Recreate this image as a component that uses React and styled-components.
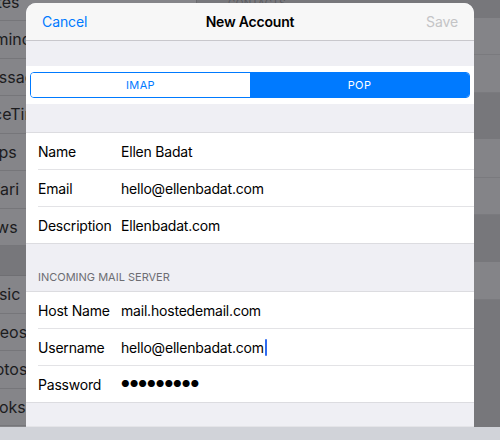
import React from 'react';
import styled, { createGlobalStyle } from 'styled-components';

const GlobalStyle = createGlobalStyle`
  html, body {
    margin: 0;
    padding: 0;
    background: #d1d3d9;
  }
  body {
    font-family: Inter, "Noto Sans", "Liberation Sans", sans-serif;
    -webkit-font-smoothing: antialiased;
  }
`;

const Page = styled.div`
  width: 500px;
  height: 440px;
  display: flex;
  flex-direction: column;
  overflow: hidden;
`;

const Screen = styled.div`
  position: relative;
  height: 427px;
  flex: none;
  overflow: hidden;
`;

const Backdrop = styled.div`
  height: 100%;
  display: grid;
  grid-template-columns: 197px 1fr;
`;

const Sidebar = styled.div`
  background: #858589;
  border-right: 1px solid #6a6a6e;
  display: flex;
  flex-direction: column;
  margin-top: -16.5px;
`;

const SidebarRow = styled.div`
  height: 36.5px;
  flex: none;
  border-bottom: 1px solid #76767a;
  display: flex;
  align-items: center;
  margin-left: -25px;
  font-size: 16px;
  color: #1c1c1e;
  white-space: nowrap;
`;

const SidebarGap = styled.div`
  height: 29px;
  flex: none;
  background: #77777b;
  border-bottom: 1px solid #6f6f73;
`;

const Pane = styled.div`
  display: flex;
  flex-direction: column;
  background: #77777b;
`;

const PaneHeader = styled.div`
  height: 18px;
  flex: none;
  padding-left: 31px;
  font-size: 10px;
  color: #5a5a5e;
  letter-spacing: 0.4px;
  line-height: 6px;
`;

const PaneBand = styled.div`
  height: ${p => p.h}px;
  flex: none;
  background: ${p => (p.light ? '#848488' : '#77777b')};
  border-bottom: 1px solid ${p => (p.light ? '#7a7a7e' : '#77777b')};
`;

const Modal = styled.div`
  position: absolute;
  left: 26px;
  top: 3px;
  width: 448px;
  height: 423px;
  background: #efeff4;
  border-radius: 10px 10px 0 0;
  overflow: hidden;
  display: flex;
  flex-direction: column;
  border-bottom: 1px solid #e4e4e8;
`;

const NavBar = styled.div`
  height: 37px;
  flex: none;
  background: #f7f7f7;
  border-bottom: 1px solid #c8c7cc;
  display: grid;
  grid-template-columns: 1fr auto 1fr;
  align-items: center;
  padding: 0 16px;
  font-size: 14px;
`;

const NavButton = styled.span`
  color: ${p => (p.disabled ? '#c4c4c6' : '#007aff')};
  justify-self: ${p => (p.right ? 'end' : 'start')};
  letter-spacing: -0.1px;
`;

const NavTitle = styled.span`
  font-weight: 600;
  color: #000;
  letter-spacing: -0.2px;
`;

const Spacer = styled.div`
  height: ${p => p.h}px;
  flex: none;
`;

const SegmentBand = styled.div`
  background: #fff;
  padding: 6px 4px;
  flex: none;
`;

const Segmented = styled.div`
  height: 24px;
  display: grid;
  grid-template-columns: 1fr 1fr;
  border: 1px solid #007aff;
  border-radius: 4px;
  overflow: hidden;
`;

const Segment = styled.div`
  display: flex;
  align-items: center;
  justify-content: center;
  font-size: 11px;
  font-weight: 400;
  letter-spacing: 0.4px;
  background: ${p => (p.active ? '#007aff' : '#fff')};
  color: ${p => (p.active ? '#fff' : '#007aff')};
`;

const Group = styled.div`
  background: #fff;
  border-top: 1px solid #dcdce0;
  border-bottom: 1px solid #dcdce0;
  padding-left: 12px;
  flex: none;
`;

const Row = styled.div`
  height: 36px;
  display: flex;
  align-items: center;
  font-size: 14px;
  color: #000;
  letter-spacing: -0.2px;
  & + & {
    border-top: 1px solid #e3e3e6;
  }
`;

const Label = styled.span`
  width: 83px;
  flex: none;
`;

const Value = styled.span`
  display: flex;
  align-items: center;
`;

const Dots = styled.span`
  font-size: 9.5px;
  letter-spacing: 0;
  line-height: 1;
`;

const Caret = styled.span`
  display: inline-block;
  width: 2px;
  height: 17px;
  margin-left: 1px;
  background: #2f6bf0;
  border-radius: 1px;
`;

const SectionHeader = styled.div`
  height: 47px;
  flex: none;
  display: flex;
  align-items: flex-end;
  padding: 0 0 7px 12px;
  box-sizing: border-box;
  font-size: 11px;
  color: #6d6d72;
`;

const Keyboard = styled.div`
  flex: 1;
  background: #d1d3d9;
`;

const sidebarItems = ['Notes', 'Reminders', 'Messages', 'FaceTime', 'Maps', 'Safari', 'News'];
const sidebarItems2 = ['Music', 'Videos', 'Photos', 'iBooks', 'Podcasts'];

const paneBands = [
  { h: 36, light: true },
  { h: 37, light: true },
  { h: 45, light: false },
  { h: 38, light: true },
  { h: 36, light: true },
  { h: 46, light: false },
  { h: 37, light: true },
  { h: 140, light: false },
];

export default function App() {
  return (
    <Page>
      <GlobalStyle />
      <Screen>
        <Backdrop>
          <Sidebar>
            {sidebarItems.map(item => (
              <SidebarRow key={item}>{item}</SidebarRow>
            ))}
            <SidebarGap />
            {sidebarItems2.map(item => (
              <SidebarRow key={item}>{item}</SidebarRow>
            ))}
          </Sidebar>
          <Pane>
            <PaneHeader>CONTACTS</PaneHeader>
            {paneBands.map((b, i) => (
              <PaneBand key={i} h={b.h} light={b.light} />
            ))}
          </Pane>
        </Backdrop>

        <Modal>
          <NavBar>
            <NavButton>Cancel</NavButton>
            <NavTitle>New Account</NavTitle>
            <NavButton right disabled>Save</NavButton>
          </NavBar>
          <Spacer h={25} />
          <SegmentBand>
            <Segmented>
              <Segment>IMAP</Segment>
              <Segment active>POP</Segment>
            </Segmented>
          </SegmentBand>
          <Spacer h={28} />
          <Group>
            <Row><Label>Name</Label><Value>Ellen Badat</Value></Row>
            <Row><Label>Email</Label><Value>hello@ellenbadat.com</Value></Row>
            <Row><Label>Description</Label><Value>Ellenbadat.com</Value></Row>
          </Group>
          <SectionHeader>INCOMING MAIL SERVER</SectionHeader>
          <Group>
            <Row><Label>Host Name</Label><Value>mail.hostedemail.com</Value></Row>
            <Row><Label>Username</Label><Value>hello@ellenbadat.com<Caret /></Value></Row>
            <Row><Label>Password</Label><Value><Dots>●●●●●●●●●</Dots></Value></Row>
          </Group>
        </Modal>
      </Screen>
      <Keyboard />
    </Page>
  );
}
